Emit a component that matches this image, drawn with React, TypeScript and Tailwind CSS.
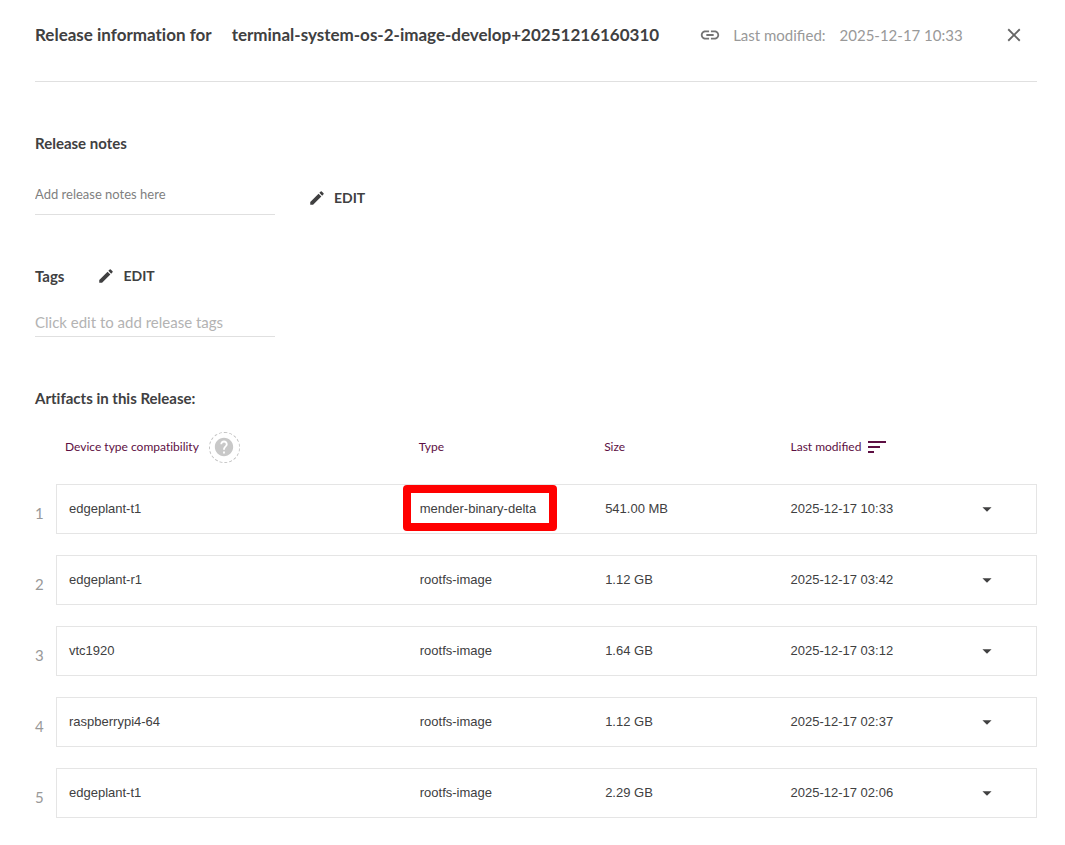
import { useState } from 'react';
import { MdArrowDropDown, MdClose, MdEdit, MdHelp, MdLink, MdSort } from 'react-icons/md';

type Artifact = {
  device: string;
  type: string;
  size: string;
  modified: string;
  highlighted?: boolean;
};

const artifacts: Artifact[] = [
  {
    device: 'edgeplant-t1',
    type: 'mender-binary-delta',
    size: '541.00 MB',
    modified: '2025-12-17 10:33',
    highlighted: true,
  },
  { device: 'edgeplant-r1', type: 'rootfs-image', size: '1.12 GB', modified: '2025-12-17 03:42' },
  { device: 'vtc1920', type: 'rootfs-image', size: '1.64 GB', modified: '2025-12-17 03:12' },
  { device: 'raspberrypi4-64', type: 'rootfs-image', size: '1.12 GB', modified: '2025-12-17 02:37' },
  { device: 'edgeplant-t1', type: 'rootfs-image', size: '2.29 GB', modified: '2025-12-17 02:06' },
];

const EditButton = ({ label }: { label: string }) => (
  <button
    type="button"
    aria-label={label}
    className="inline-flex items-center gap-2 text-sm leading-6 font-bold"
  >
    <MdEdit size={18} />
    EDIT
  </button>
);

const ArtifactRow = ({ artifact, index }: { artifact: Artifact; index: number }) => (
  <tr className="h-[50px]">
    <td className="pt-2 font-['Lato',sans-serif] text-[15px] text-[#999]">{index}</td>
    <td className="border-y border-l border-[#e5e5e5] pl-3">{artifact.device}</td>
    <td className="relative border-y border-[#e5e5e5] pl-3">
      {artifact.type}
      {artifact.highlighted && (
        <span className="absolute top-0 -left-[5px] h-[46px] w-[154px] rounded border-8 border-[#ff0000]" />
      )}
    </td>
    <td className="border-y border-[#e5e5e5] pl-3">{artifact.size}</td>
    <td className="border-y border-[#e5e5e5] pl-3">{artifact.modified}</td>
    <td className="border-y border-r border-[#e5e5e5] pl-3">
      <button type="button" aria-label={`Expand ${artifact.device}`} className="block">
        <MdArrowDropDown size={22} />
      </button>
    </td>
  </tr>
);

const App = () => {
  const [notes, setNotes] = useState('');
  const [tags, setTags] = useState('');

  return (
    <main className="bg-white pr-7 pl-[35px] font-['Lato',sans-serif] text-[#404041]">
      <header className="flex h-[82px] items-start border-b border-[#e0e0e0] pt-[23px]">
        <h1 className="flex gap-5 text-[17px] leading-6 font-bold whitespace-nowrap [font-variant-ligatures:none]">
          <span>Release information for</span>
          <span>terminal-system-os-2-image-develop+20251216160310</span>
        </h1>
        <button type="button" aria-label="Copy link" className="ml-10 flex h-6 items-center text-[#737373]">
          <MdLink size={22} />
        </button>
        <p className="ml-3 flex gap-[14px] text-[15px] leading-6 whitespace-nowrap text-[#999]">
          <span>Last modified:</span>
          <span>2025-12-17 10:33</span>
        </p>
        <button type="button" aria-label="Close" className="mr-3 ml-auto flex h-6 items-center text-[#666]">
          <MdClose size={22} />
        </button>
      </header>

      <section className="pt-[49px]">
        <h2 className="text-[15px] leading-6 font-bold">Release notes</h2>
        <div className="mt-[25px] flex items-start gap-[33px]">
          <input
            type="text"
            aria-label="Release notes"
            placeholder="Add release notes here"
            value={notes}
            onChange={(e) => setNotes(e.target.value)}
            className="h-[35px] w-60 border-b border-[#e0e0e0] pb-[6px] text-[13px] outline-none placeholder:text-[#7f7f7f]"
          />
          <div className="pt-[6px]">
            <EditButton label="Edit release notes" />
          </div>
        </div>
      </section>

      <section className="pt-[49px]">
        <div className="flex items-center gap-[33px]">
          <h2 className="text-[15px] leading-6 font-bold">Tags</h2>
          <EditButton label="Edit tags" />
        </div>
        <input
          type="text"
          aria-label="Release tags"
          placeholder="Click edit to add release tags"
          value={tags}
          onChange={(e) => setTags(e.target.value)}
          className="mt-[21px] block h-7 w-60 border-b border-[#e0e0e0] pb-[2px] text-[15px] outline-none placeholder:text-[#b3b3b3]"
        />
      </section>

      <section className="pt-[49px] pb-6">
        <h2 className="text-[15px] leading-6 font-bold [font-variant-ligatures:none]">
          Artifacts in this Release:
        </h2>
        <table className="w-full table-fixed border-separate border-spacing-x-0 border-spacing-y-[21px] font-['Liberation_Sans',Arial,sans-serif] text-[13px]">
          <colgroup>
            <col className="w-[21px]" />
            <col />
            <col className="w-[18.5%]" />
            <col className="w-[18.5%]" />
            <col className="w-[18.5%]" />
            <col className="w-[7.3%]" />
          </colgroup>
          <thead>
            <tr className="h-[32px] text-left font-['Lato',sans-serif] text-xs text-[#5d0f43]">
              <td />
              <th className="pl-[9px] font-normal">
                <div className="flex items-center gap-[10px] [font-variant-ligatures:none]">
                  Device type compatibility
                  <button
                    type="button"
                    aria-label="Help"
                    className="flex size-[31px] items-center justify-center rounded-full border border-dashed border-[#c4c4c4] text-[#c8c8c8]"
                  >
                    <MdHelp size={22} />
                  </button>
                </div>
              </th>
              <th className="pl-[11px] font-normal">Type</th>
              <th className="pl-[11px] font-normal">Size</th>
              <th className="pl-3 font-normal">
                <button type="button" className="flex items-center gap-1">
                  Last modified
                  <MdSort size={24} />
                </button>
              </th>
              <td />
            </tr>
          </thead>
          <tbody>
            {artifacts.map((artifact, i) => (
              <ArtifactRow key={artifact.modified} artifact={artifact} index={i + 1} />
            ))}
          </tbody>
        </table>
      </section>
    </main>
  );
};

export default App;
